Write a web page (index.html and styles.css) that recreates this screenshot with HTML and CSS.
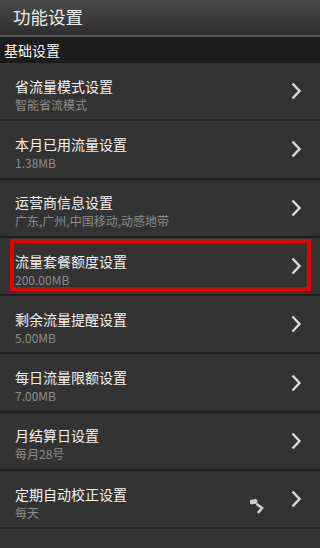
FILE: index.html
```html
<!DOCTYPE html>
<html lang="zh-CN">
<head>
    <meta charset="UTF-8">
    <meta name="viewport" content="width=device-width, initial-scale=1.0">
    <title>功能设置</title>
    <link rel="stylesheet" href="styles.css">
</head>
<body>
    <div class="screen">
        <!-- 标题栏 -->
        <div class="title-bar">功能设置</div>
        <div class="group-head">基础设置</div>

        <div class="list">
            <div class="item">
                <div class="texts">
                    <div class="name">省流量模式设置</div>
                    <div class="value">智能省流模式</div>
                </div>
                <svg class="arrow" viewBox="0 0 12 18"><path d="M2.5 1.5 L9.5 9 L2.5 16.5"/></svg>
            </div>
            <div class="item">
                <div class="texts">
                    <div class="name">本月已用流量设置</div>
                    <div class="value">1.38MB</div>
                </div>
                <svg class="arrow" viewBox="0 0 12 18"><path d="M2.5 1.5 L9.5 9 L2.5 16.5"/></svg>
            </div>
            <div class="item">
                <div class="texts">
                    <div class="name">运营商信息设置</div>
                    <div class="value">广东,广州,中国移动,动感地带</div>
                </div>
                <svg class="arrow" viewBox="0 0 12 18"><path d="M2.5 1.5 L9.5 9 L2.5 16.5"/></svg>
            </div>
            <div class="item marked">
                <div class="texts">
                    <div class="name">流量套餐额度设置</div>
                    <div class="value">200.00MB</div>
                </div>
                <svg class="arrow" viewBox="0 0 12 18"><path d="M2.5 1.5 L9.5 9 L2.5 16.5"/></svg>
                <div class="red-box"></div>
            </div>
            <div class="item">
                <div class="texts">
                    <div class="name">剩余流量提醒设置</div>
                    <div class="value">5.00MB</div>
                </div>
                <svg class="arrow" viewBox="0 0 12 18"><path d="M2.5 1.5 L9.5 9 L2.5 16.5"/></svg>
            </div>
            <div class="item">
                <div class="texts">
                    <div class="name">每日流量限额设置</div>
                    <div class="value">7.00MB</div>
                </div>
                <svg class="arrow" viewBox="0 0 12 18"><path d="M2.5 1.5 L9.5 9 L2.5 16.5"/></svg>
            </div>
            <div class="item">
                <div class="texts">
                    <div class="name">月结算日设置</div>
                    <div class="value">每月28号</div>
                </div>
                <svg class="arrow" viewBox="0 0 12 18"><path d="M2.5 1.5 L9.5 9 L2.5 16.5"/></svg>
            </div>
            <div class="item">
                <div class="texts">
                    <div class="name">定期自动校正设置</div>
                    <div class="value">每天</div>
                </div>
                <svg class="mark" viewBox="0 0 16 16"><circle cx="2" cy="3" r="1.2"/><circle cx="5" cy="2.5" r="1.2"/><path d="M6.5 5 L12 9 L8 14"/></svg>
                <svg class="arrow" viewBox="0 0 12 18"><path d="M2.5 1.5 L9.5 9 L2.5 16.5"/></svg>
            </div>
        </div>
    </div>
</body>
</html>
```

FILE: styles.css
```css
* { padding: 0; margin: 0; box-sizing: border-box; }
body { background: #333; font-family: "Noto Sans CJK SC", "Noto Sans", sans-serif; color: #f0f0f0; }
.screen { width: 320px; height: 548px; overflow: hidden; background: #333; }

/* 标题栏 */
.title-bar { height: 37px; padding: 0 0 2px 13px; display: flex; align-items: center; font-size: 17.5px; color: #ececec; background: linear-gradient(#4a4a4a, #2e2e2e); border-bottom: 2px solid #555; }
.group-head { height: 26px; padding-left: 4px; display: flex; align-items: center; font-size: 14px; color: #f4f4f4; background: #1c1c1c; }

/* 列表 */
.item { position: relative; height: 58.3px; display: flex; align-items: center; padding: 6px 18px 0 15px; border-bottom: 2px solid #202020; background: #333; }
.texts { flex: 1; display: flex; flex-direction: column; }
.name { font-size: 14px; line-height: 20px; color: #f2f2f2; }
.value { font-size: 12px; line-height: 17px; color: #8c8c8c; }
.arrow { width: 12px; height: 18px; margin-top: -6px; fill: none; stroke: #dcdcdc; stroke-width: 2.4; }
.mark { width: 16px; height: 16px; margin: 10px 24px 0 0; fill: #cfcfcf; stroke: #cfcfcf; stroke-width: 2.6; }
.mark path { fill: none; }
.red-box { position: absolute; top: 1px; left: 10px; right: 9px; bottom: 3px; border: 4.5px solid #e60000; }
```
